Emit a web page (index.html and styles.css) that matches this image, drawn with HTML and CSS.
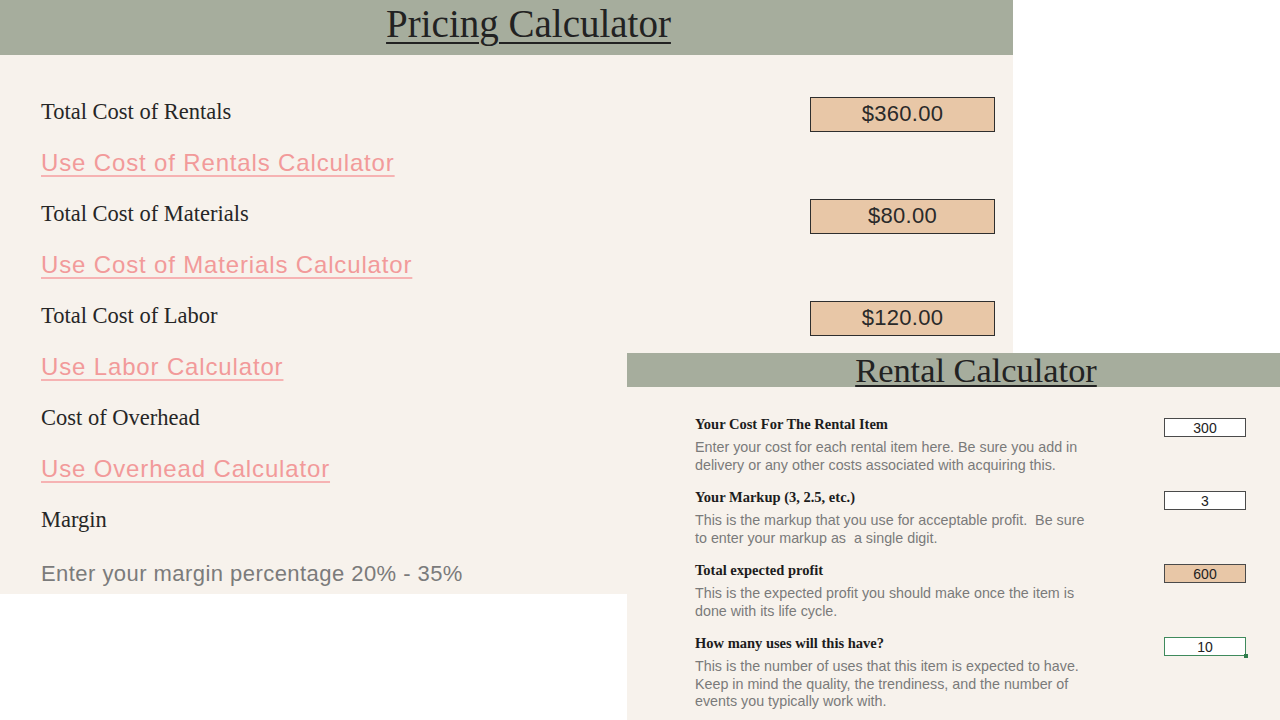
FILE: index.html
```html
<!DOCTYPE html>
<html lang="en">
<head>
<meta charset="utf-8">
<title>Pricing Calculator</title>
<link rel="stylesheet" href="styles.css">
</head>
<body>
<div class="desk">
  <section class="panel pricing">
    <header class="pricing-bar"><h1 class="pricing-title">Pricing Calculator</h1></header>
    <div class="pricing-body">
      <div class="row"><span class="label">Total Cost of Rentals</span><div class="value">$360.00</div></div>
      <div class="row"><a class="link" href="#">Use Cost of Rentals Calculator</a></div>
      <div class="row"><span class="label">Total Cost of Materials</span><div class="value">$80.00</div></div>
      <div class="row"><a class="link" href="#">Use Cost of Materials Calculator</a></div>
      <div class="row"><span class="label">Total Cost of Labor</span><div class="value">$120.00</div></div>
      <div class="row"><a class="link" href="#">Use Labor Calculator</a></div>
      <div class="row"><span class="label">Cost of Overhead</span></div>
      <div class="row"><a class="link" href="#">Use Overhead Calculator</a></div>
      <div class="row"><span class="label">Margin</span></div>
      <div class="row hint-row"><span class="hint">Enter your margin percentage 20% - 35%</span></div>
    </div>
  </section>

  <section class="panel rental">
    <header class="rental-bar"><h2 class="rental-title">Rental Calculator</h2></header>
    <div class="rental-body">
      <div class="r-row">
        <div class="r-text">
          <div class="r-label">Your Cost For The Rental Item</div>
          <div class="r-desc">Enter your cost for each rental item here. Be sure you add in<br>delivery or any other costs associated with acquiring this.</div>
        </div>
        <div class="cell">300</div>
      </div>
      <div class="r-row">
        <div class="r-text">
          <div class="r-label">Your Markup (3, 2.5, etc.)</div>
          <div class="r-desc">This is the markup that you use for acceptable profit.&nbsp; Be sure<br>to enter your markup as &nbsp;a single digit.</div>
        </div>
        <div class="cell">3</div>
      </div>
      <div class="r-row">
        <div class="r-text">
          <div class="r-label">Total expected profit</div>
          <div class="r-desc">This is the expected profit you should make once the item is<br>done with its life cycle.</div>
        </div>
        <div class="cell cell-result">600</div>
      </div>
      <div class="r-row">
        <div class="r-text">
          <div class="r-label">How many uses will this have?</div>
          <div class="r-desc">This is the number of uses that this item is expected to have.<br>Keep in mind the quality, the trendiness, and the number of<br>events you typically work with.</div>
        </div>
        <div class="cell cell-active">10<span class="handle"></span></div>
      </div>
    </div>
  </section>
</div>
</body>
</html>
```

FILE: styles.css
```css
html, body {
  margin: 0;
  padding: 0;
  background: #ffffff;
}

.desk {
  position: relative;
  width: 1280px;
  height: 720px;
  overflow: hidden;
  background: #ffffff;
}

.panel {
  position: absolute;
  background: #f7f2ec;
  display: flex;
  flex-direction: column;
}

/* ---------- Pricing panel ---------- */
.pricing {
  left: 0;
  top: 0;
  width: 1013px;
  height: 594px;
}

.pricing-bar {
  height: 55px;
  background: #a6ad9d;
  display: flex;
  justify-content: center;
  box-sizing: border-box;
  padding: 0 0 8px 44px;
}

.pricing-title {
  margin: 0;
  font-family: "Liberation Serif", "Times New Roman", serif;
  font-weight: normal;
  font-size: 39px;
  line-height: 47px;
  color: #222222;
  text-decoration: underline;
  text-decoration-thickness: 2px;
  text-underline-offset: 5px;
}

.pricing-body {
  padding: 31px 18px 0 41px;
  display: flex;
  flex-direction: column;
}

.row {
  height: 51px;
  display: flex;
  align-items: center;
  justify-content: space-between;
}

.label {
  font-family: "Liberation Serif", "Times New Roman", serif;
  font-size: 22.5px;
  color: #262626;
}

.link {
  font-family: "Liberation Sans", Arial, sans-serif;
  font-size: 24px;
  letter-spacing: 0.85px;
  color: #f29a9a;
  text-decoration: underline;
  text-decoration-color: #f6b3b3;
  text-decoration-thickness: 1.5px;
  text-underline-offset: 4px;
}

.value {
  width: 185px;
  height: 35px;
  box-sizing: border-box;
  margin-top: 5px;
  background: #e8c7a7;
  border: 1px solid #2e2e2e;
  display: flex;
  align-items: center;
  justify-content: center;
  font-family: "Liberation Sans", Arial, sans-serif;
  font-size: 22px;
  letter-spacing: 0.3px;
  color: #2a2a2a;
}

.hint-row {
  margin-top: 3px;
}

.hint {
  font-family: "Liberation Sans", Arial, sans-serif;
  font-size: 22px;
  letter-spacing: 0.45px;
  color: #7b7b7b;
}

/* ---------- Rental panel ---------- */
.rental {
  left: 627px;
  top: 353px;
  width: 698px;
  height: 367px;
}

.rental-bar {
  height: 34px;
  background: #a6ad9d;
  display: flex;
  justify-content: center;
}

.rental-title {
  margin: 0;
  font-family: "Liberation Serif", "Times New Roman", serif;
  font-weight: normal;
  font-size: 34.4px;
  line-height: 34px;
  color: #222222;
  text-decoration: underline;
  text-decoration-thickness: 1.5px;
  text-underline-offset: 3px;
}

.rental-body {
  padding: 29px 79px 0 68px;
  display: flex;
  flex-direction: column;
  gap: 15px;
}

.r-row {
  display: grid;
  grid-template-columns: 1fr 82px;
  align-items: start;
}

.r-label {
  font-family: "Liberation Serif", "Times New Roman", serif;
  font-weight: bold;
  font-size: 14.5px;
  line-height: 16px;
  color: #1c1c1c;
  margin-bottom: 7px;
}

.r-desc {
  font-family: "Liberation Sans", Arial, sans-serif;
  font-size: 14.3px;
  line-height: 17.5px;
  color: #7a7a7a;
}

.cell {
  position: relative;
  height: 19px;
  margin-top: 2px;
  box-sizing: border-box;
  background: #ffffff;
  border: 1px solid #4a4a4a;
  display: flex;
  align-items: center;
  justify-content: center;
  font-family: "Liberation Sans", Arial, sans-serif;
  font-size: 14px;
  color: #222222;
}

.cell-result {
  background: #e8c7a7;
}

.cell-active {
  border: 1.5px solid #3f8a5c;
}

.handle {
  position: absolute;
  right: -3px;
  bottom: -3px;
  width: 4px;
  height: 4px;
  background: #2f7d4c;
}
```
